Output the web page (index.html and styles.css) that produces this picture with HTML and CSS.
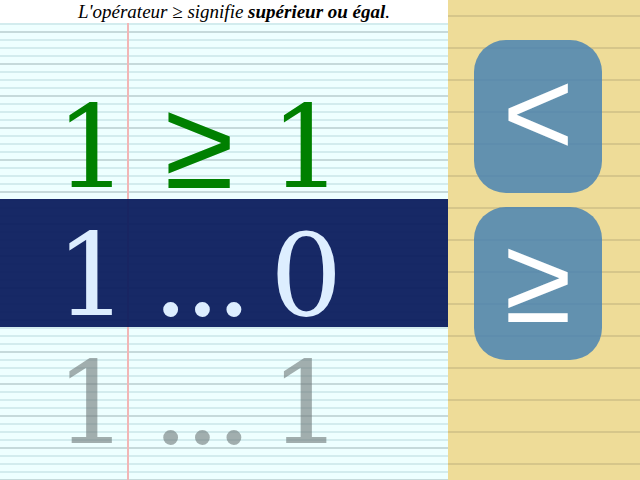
FILE: index.html
```html
<!DOCTYPE html>
<html lang="fr">
<head>
<meta charset="utf-8">
<title>Comparaison</title>
<link rel="stylesheet" href="styles.css">
</head>
<body>
<div class="app">
  <div class="paper">
    <div class="header"><i>L'opérateur ≥ signifie <b>supérieur ou égal</b>.</i></div>
    <div class="rows">
      <div class="row done"><span class="left">1</span><span class="op sym">≥</span><span class="right">1</span></div>
      <div class="row current"><span class="left">1</span><span class="op dots">...</span><span class="right">0</span></div>
      <div class="row next"><span class="left">1</span><span class="op dots">...</span><span class="right">1</span></div>
    </div>
  </div>
  <div class="side">
    <button class="key">&lt;</button>
    <button class="key">≥</button>
  </div>
</div>
</body>
</html>
```
FILE: styles.css
```css
html, body {
  margin: 0;
  padding: 0;
  width: 640px;
  height: 480px;
  overflow: hidden;
}
.app {
  display: flex;
  width: 640px;
  height: 480px;
}
.paper {
  width: 448px;
  height: 480px;
  display: flex;
  flex-direction: column;
  background-color: #eeffff;
  background-image:
    linear-gradient(to right, transparent 127px, #f2b6b6 127px, #f2b6b6 129px, transparent 129px),
    repeating-linear-gradient(to bottom, #c6dadb 0, #c6dadb 2px, transparent 2px, transparent 32px),
    repeating-linear-gradient(to bottom, #d3ecee 0, #d3ecee 2px, transparent 2px, transparent 8px);
  background-position: 0 0, 0 31px, 0 -1px;
}
.header {
  height: 23px;
  background: #ffffff;
  font-family: "Liberation Serif", serif;
  font-size: 19px;
  line-height: 23px;
  text-align: center;
  color: #000;
  padding-left: 20px;
}
.rows {
  padding-top: 48px;
  display: flex;
  flex-direction: column;
}
.row {
  height: 128px;
  box-sizing: border-box;
  padding-top: 13px;
  display: grid;
  grid-template-columns: 128px 142px 1fr;
  font-family: "DejaVu Serif", serif;
  font-size: 114px;
  line-height: 128px;
  white-space: nowrap;
}
.left { text-align: right; }
.op { text-align: center; }
.right { text-align: left; }
.sym {
  font-family: "Liberation Sans", sans-serif;
  font-size: 126px;
  line-height: 122px;
}
.dots {
  letter-spacing: -4.5px;
  padding-left: 2px;
}
.done { color: #008000; }
.current {
  background: rgba(10, 28, 92, 0.94);
  color: #ddeeff;
}
.next { color: rgba(110, 120, 120, 0.6); }
.side {
  flex: 1;
  display: flex;
  flex-direction: column;
  gap: 14px;
  padding: 40px 38px 0 26px;
  background-color: #eedc98;
  background-image: repeating-linear-gradient(to bottom, #d6c68a 0, #d6c68a 2px, transparent 2px, transparent 32px);
  background-position: 0 15px;
}
.key {
  width: 128px;
  height: 153px;
  border: 0;
  border-radius: 32px;
  background: rgba(70, 130, 180, 0.84);
  color: #ffffff;
  font-family: "Liberation Sans", sans-serif;
  font-size: 122px;
  line-height: 1;
  padding: 0 0 8px;
}
```
